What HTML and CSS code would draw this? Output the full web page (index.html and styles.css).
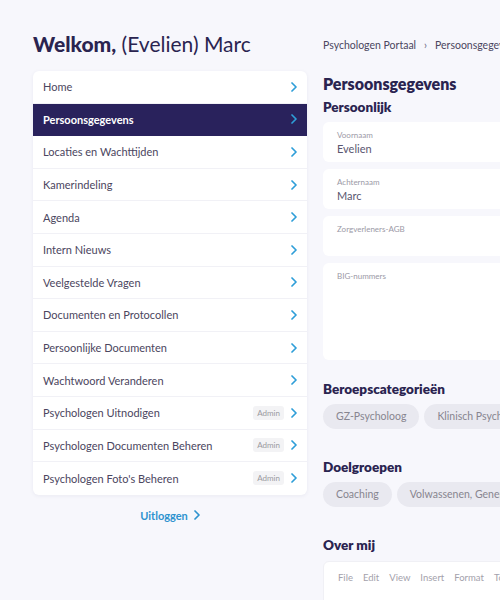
FILE: index.html
```html
<!DOCTYPE html>
<html lang="nl">
<head>
<meta charset="utf-8">
<title>Persoonsgegevens</title>
<link rel="stylesheet" href="styles.css">
</head>
<body>
<div class="page">
  <aside class="side">
    <h1 class="welcome"><strong>Welkom,</strong> (Evelien) Marc</h1>
    <nav class="menu">
      <a class="item"><span class="label">Home</span><span class="chev"><svg viewBox="0 0 6 10"><polyline points="1,1 5,5 1,9"/></svg></span></a>
      <a class="item active"><span class="label">Persoonsgegevens</span><span class="chev"><svg viewBox="0 0 6 10"><polyline points="1,1 5,5 1,9"/></svg></span></a>
      <a class="item"><span class="label">Locaties en Wachttijden</span><span class="chev"><svg viewBox="0 0 6 10"><polyline points="1,1 5,5 1,9"/></svg></span></a>
      <a class="item"><span class="label">Kamerindeling</span><span class="chev"><svg viewBox="0 0 6 10"><polyline points="1,1 5,5 1,9"/></svg></span></a>
      <a class="item"><span class="label">Agenda</span><span class="chev"><svg viewBox="0 0 6 10"><polyline points="1,1 5,5 1,9"/></svg></span></a>
      <a class="item"><span class="label">Intern Nieuws</span><span class="chev"><svg viewBox="0 0 6 10"><polyline points="1,1 5,5 1,9"/></svg></span></a>
      <a class="item"><span class="label">Veelgestelde Vragen</span><span class="chev"><svg viewBox="0 0 6 10"><polyline points="1,1 5,5 1,9"/></svg></span></a>
      <a class="item"><span class="label">Documenten en Protocollen</span><span class="chev"><svg viewBox="0 0 6 10"><polyline points="1,1 5,5 1,9"/></svg></span></a>
      <a class="item"><span class="label">Persoonlijke Documenten</span><span class="chev"><svg viewBox="0 0 6 10"><polyline points="1,1 5,5 1,9"/></svg></span></a>
      <a class="item"><span class="label">Wachtwoord Veranderen</span><span class="chev"><svg viewBox="0 0 6 10"><polyline points="1,1 5,5 1,9"/></svg></span></a>
      <a class="item"><span class="label">Psychologen Uitnodigen</span><span class="badge">Admin</span><span class="chev"><svg viewBox="0 0 6 10"><polyline points="1,1 5,5 1,9"/></svg></span></a>
      <a class="item"><span class="label">Psychologen Documenten Beheren</span><span class="badge">Admin</span><span class="chev"><svg viewBox="0 0 6 10"><polyline points="1,1 5,5 1,9"/></svg></span></a>
      <a class="item"><span class="label">Psychologen Foto's Beheren</span><span class="badge">Admin</span><span class="chev"><svg viewBox="0 0 6 10"><polyline points="1,1 5,5 1,9"/></svg></span></a>
    </nav>
    <a class="logout">Uitloggen <svg viewBox="0 0 6 10"><polyline points="1,1 5,5 1,9"/></svg></a>
  </aside>

  <main class="main">
    <div class="crumbs"><span>Psychologen Portaal</span><span class="sep">›</span><span>Persoonsgegevens</span></div>
    <h2 class="title">Persoonsgegevens</h2>
    <h3 class="sub">Persoonlijk</h3>
    <div class="fields">
      <div class="field"><div class="flabel">Voornaam</div><div class="fvalue">Evelien</div></div>
      <div class="field"><div class="flabel">Achternaam</div><div class="fvalue">Marc</div></div>
      <div class="field"><div class="flabel">Zorgverleners-AGB</div><div class="fvalue"></div></div>
      <div class="field tall"><div class="flabel">BIG-nummers</div></div>
    </div>

    <h3 class="section">Beroepscategorieën</h3>
    <div class="chips">
      <span class="chip">GZ-Psycholoog</span>
      <span class="chip">Klinisch Psycholoog</span>
    </div>

    <h3 class="section">Doelgroepen</h3>
    <div class="chips">
      <span class="chip">Coaching</span>
      <span class="chip">Volwassenen, Generalistisch</span>
    </div>

    <h3 class="section">Over mij</h3>
    <div class="editor">
      <div class="emenu"><span>File</span><span>Edit</span><span>View</span><span>Insert</span><span>Format</span><span>Tools</span></div>
    </div>
  </main>
</div>
</body>
</html>
```

FILE: styles.css
```css
html, body {
  margin: 0;
  padding: 0;
  width: 500px;
  height: 600px;
  overflow: hidden;
}
body {
  background: #f7f7fc;
  font-family: "Lato", "Noto Sans", sans-serif;
  color: #47435c;
}
.page {
  display: grid;
  grid-template-columns: 274px 420px;
  column-gap: 16px;
  padding: 31px 0 0 33px;
  width: 760px;
}
.welcome {
  margin: 0 0 14px;
  font-size: 21px;
  line-height: 26px;
  font-weight: 400;
  color: #2a2450;
  white-space: nowrap;
}
.welcome strong {
  font-weight: 900;
}
.menu {
  display: flex;
  flex-direction: column;
  background: #fff;
  border-radius: 6px;
  overflow: hidden;
  box-shadow: 0 1px 4px rgba(40, 36, 90, 0.06);
}
.item {
  display: flex;
  align-items: center;
  height: 32.6px;
  box-sizing: border-box;
  padding: 0 10px 0 10px;
  border-bottom: 1px solid #f1f1f6;
  font-size: 11px;
  color: #4b4660;
}
.item:last-child {
  border-bottom: none;
}
.item .label {
  flex: 1;
  white-space: nowrap;
}
.item.active {
  background: #29225c;
  color: #fff;
  font-weight: 700;
  border-bottom-color: #29225c;
}
.chev {
  display: flex;
  width: 6px;
  height: 10px;
  margin-left: 7px;
}
.chev svg, .logout svg {
  width: 6px;
  height: 10px;
  fill: none;
  stroke: #2e9ed8;
  stroke-width: 1.7;
  stroke-linecap: round;
  stroke-linejoin: round;
}
.badge {
  font-size: 8px;
  color: #9a9a9f;
  background: #f3f3f5;
  border-radius: 3px;
  padding: 2px 4px;
  line-height: 10px;
}
.logout {
  display: flex;
  justify-content: center;
  align-items: center;
  gap: 6px;
  margin-top: 14px;
  font-size: 11px;
  font-weight: 700;
  color: #2e93cf;
}
.logout svg {
  stroke: #2e93cf;
}
.main {
  display: flex;
  flex-direction: column;
}
.crumbs {
  display: flex;
  gap: 8px;
  margin-top: 8px;
  font-size: 10.5px;
  line-height: 13px;
  color: #4b4660;
  white-space: nowrap;
}
.crumbs .sep {
  color: #6b6780;
}
.title {
  margin: 22px 0 0;
  font-size: 16px;
  line-height: 20px;
  font-weight: 800;
  color: #2a2450;
}
.sub {
  margin: 4px 0 0;
  font-size: 13.5px;
  line-height: 18px;
  font-weight: 800;
  color: #2a2450;
}
.fields {
  display: flex;
  flex-direction: column;
  gap: 7px;
  margin-top: 6px;
}
.field {
  background: #fff;
  border-radius: 6px;
  height: 40px;
  box-sizing: border-box;
  padding: 8px 14px 0;
}
.field.tall {
  height: 97px;
}
.flabel {
  font-size: 8px;
  line-height: 10px;
  color: #9b99a6;
}
.fvalue {
  margin-top: 2px;
  font-size: 11px;
  line-height: 13px;
  color: #5a5770;
}
.section {
  margin: 20px 0 0;
  font-size: 13.5px;
  line-height: 18px;
  font-weight: 800;
  color: #2a2450;
}
.chips {
  display: flex;
  gap: 5px;
  margin-top: 6px;
  white-space: nowrap;
}
.chip {
  height: 25px;
  line-height: 25px;
  padding: 0 13px;
  border-radius: 13px;
  background: #e9e9f0;
  font-size: 10.5px;
  color: #87858f;
}
.chips + .section {
  margin-top: 29px;
}
.editor {
  margin-top: 7px;
  background: #fff;
  border: 1px solid #f0f0f5;
  border-radius: 6px;
  height: 80px;
  padding: 10px 14px 0;
}
.emenu {
  display: flex;
  gap: 10px;
  font-size: 9.5px;
  line-height: 12px;
  color: #a3a1ab;
  white-space: nowrap;
}
```
